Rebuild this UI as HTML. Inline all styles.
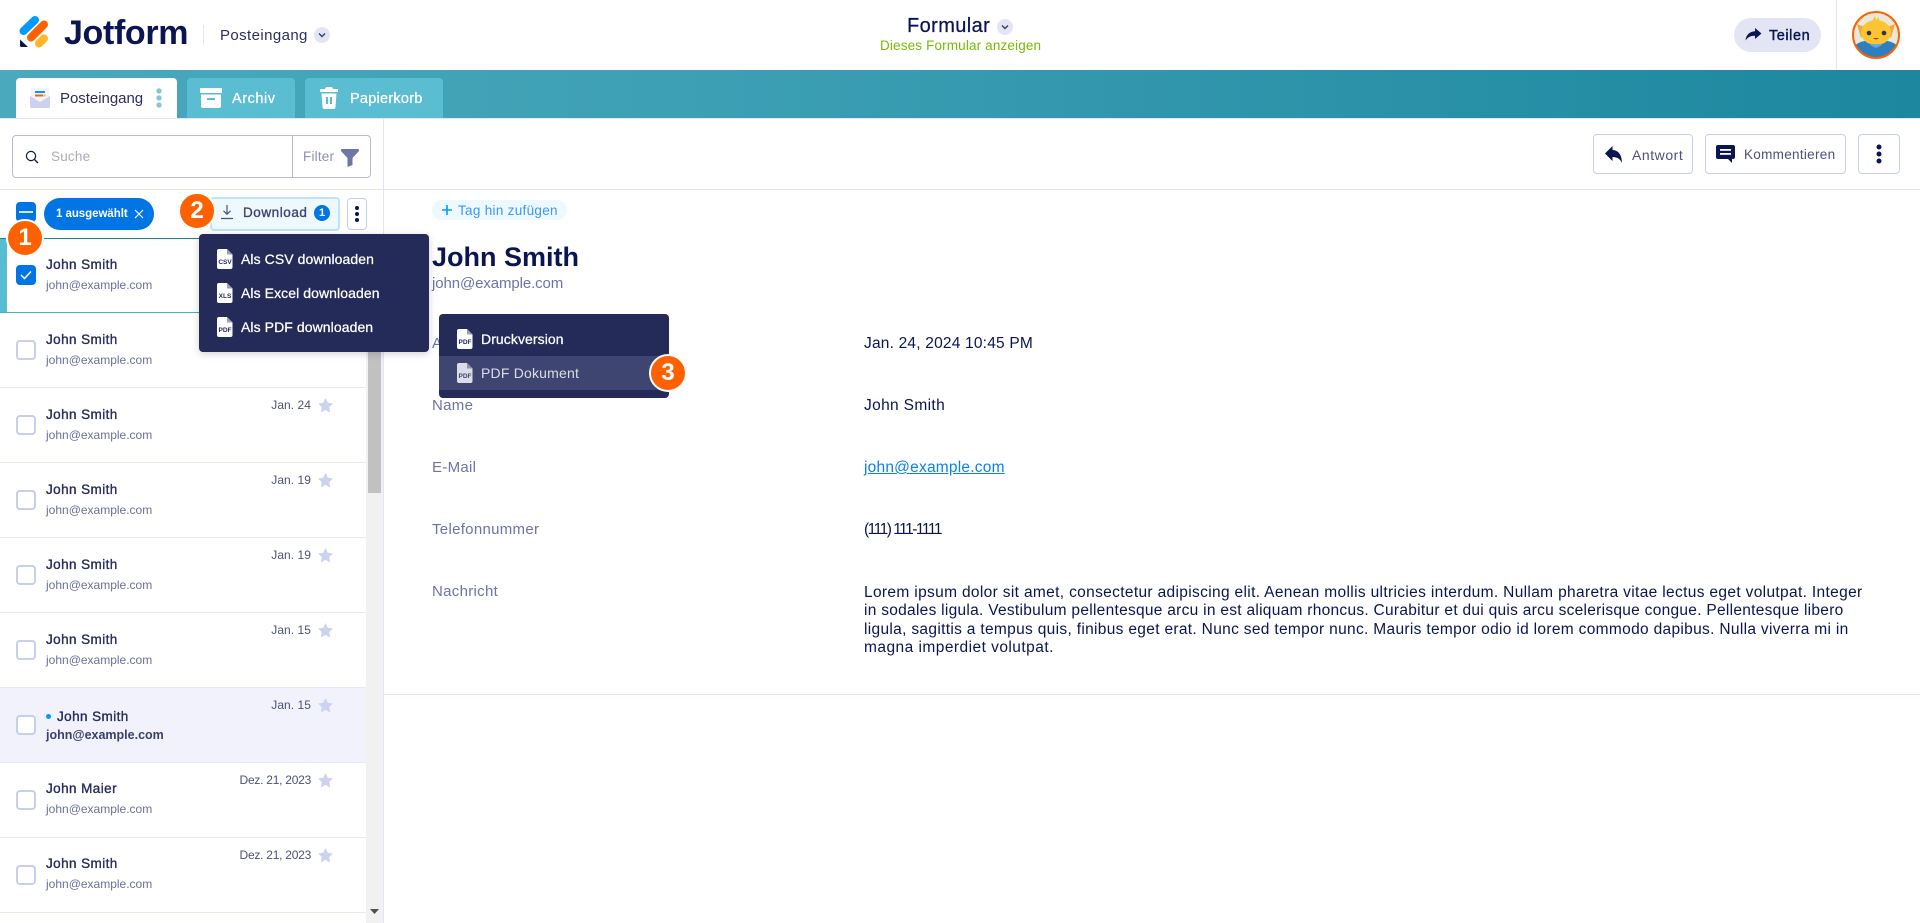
<!DOCTYPE html>
<html lang="de"><head><meta charset="utf-8"><title>Jotform Posteingang</title>
<style>
*{box-sizing:border-box}
html,body{margin:0;padding:0;width:1920px;height:923px;overflow:hidden;background:#fff;font-family:"Liberation Sans",sans-serif;color:#0a1551}
.a{position:absolute;white-space:nowrap}
.t{position:absolute;white-space:nowrap;line-height:20px;height:20px}
.m{-webkit-text-stroke:.25px currentColor}
.row{position:absolute;left:0;width:366px;height:75px;border-bottom:1px solid #e8e9f4;background:#fff}
.row>*{margin-top:-1px}
.cb{position:absolute;left:16px;top:28px;width:20px;height:20px;border:2px solid #c8ceed;border-radius:4px;background:#fff}
.nm{position:absolute;left:46px;top:17px;line-height:20px;font-size:13.5px;color:#252a5b;white-space:nowrap;-webkit-text-stroke:.35px currentColor;letter-spacing:.42px}
.em{position:absolute;left:46px;top:37px;line-height:20px;font-size:12px;color:#6c7096;white-space:nowrap;letter-spacing:0}
.dt{position:absolute;right:55px;top:8px;line-height:20px;font-size:12px;color:#4c5178;white-space:nowrap;letter-spacing:.05px}
.dz{letter-spacing:-.25px}
.st{position:absolute;left:318px;top:11px}
.st path{fill:#cdd2ee;stroke:#cdd2ee;stroke-width:1;stroke-linejoin:round}
.lab{position:absolute;left:432px;font-size:15px;line-height:20px;color:#6c73a8;white-space:nowrap;letter-spacing:.3px}
.val{position:absolute;left:864px;font-size:15.5px;line-height:20px;color:#0a1551;white-space:nowrap;letter-spacing:.2px}
.mi{position:absolute;font-size:14px;line-height:20px;color:#fff;white-space:nowrap;-webkit-text-stroke:.25px #fff;letter-spacing:.08px}
.b{position:absolute;border-radius:50%;background:#ff6100;border:2px solid #fff;color:#fff;font-size:24px;font-weight:bold;line-height:34px;text-align:center;width:38px;height:38px}
.btn{position:absolute;border:1px solid #c8ceed;border-radius:4px;background:#fff}
</style></head><body>

<!-- top bar -->
<svg class="a" style="left:0;top:0" width="60" height="60" viewBox="0 0 60 60">
<path d="M23.5 31L35 20" stroke="#0099ff" stroke-width="8" stroke-linecap="round"/>
<path d="M31 37.5L44 24.5" stroke="#ff6100" stroke-width="8" stroke-linecap="round"/>
<path d="M39 43.500L44 38.5" stroke="#ffb629" stroke-width="8" stroke-linecap="round"/>
<path d="M20 39.500L28 47H21.5Q20 47 20 45.500Z" fill="#0a1551"/>
</svg>
<div class="a" style="left:64px;top:14px;font-size:34px;line-height:38px;font-weight:bold;color:#0a1551;letter-spacing:-.35px">Jotform</div>
<div class="a" style="left:203px;top:25px;width:1px;height:20px;background:#e3e5f5"></div>
<div class="t" style="left:220px;top:26px;font-size:15px;color:#2a2f5f;letter-spacing:.4px">Posteingang</div>
<svg class="a" style="left:314px;top:27px" width="16" height="16"><circle cx="8" cy="8" r="8" fill="#e3e5f5"/><path d="M5 6.500L8 9.500L11 6.500" fill="none" stroke="#343c6a" stroke-width="1.400"/></svg>

<div class="a m" style="left:907px;top:14px;font-size:20px;line-height:24px;color:#0a1551;letter-spacing:.4px">Formular</div>
<svg class="a" style="left:997px;top:19px" width="16" height="16"><circle cx="8" cy="8" r="8" fill="#e3e5f5"/><path d="M5 6.500L8 9.500L11 6.500" fill="none" stroke="#343c6a" stroke-width="1.400"/></svg>
<div class="t" style="left:880px;top:36px;font-size:13.500px;color:#78bb07;letter-spacing:.15px">Dieses Formular anzeigen</div>

<div class="a" style="left:1734px;top:18px;width:87px;height:34px;border-radius:17px;background:#e3e5f5"></div>
<svg class="a" style="left:1745px;top:27px" width="17" height="16" viewBox="0 0 17 16"><path d="M10 1L16.500 6.500L10 12V8.800C6 8.600 3 10 .5 13.500C1 8 4.500 4.400 10 4.200Z" fill="#0a1551"/></svg>
<div class="t" style="left:1769px;top:26px;font-size:14.500px;color:#0a1551;letter-spacing:.55px;-webkit-text-stroke:.4px currentColor">Teilen</div>
<div class="a" style="left:1836px;top:0;width:1px;height:70px;background:#e3e5e8"></div>
<svg class="a" style="left:1852px;top:11px" width="48" height="48" viewBox="0 0 48 48">
<defs><clipPath id="ca"><circle cx="24" cy="24" r="22.500"/></clipPath></defs>
<circle cx="24" cy="24" r="23" fill="#e6e9dc"/>
<g clip-path="url(#ca)">
<path d="M2 48V36Q6 29 24 29T46 36V48Z" fill="#2e7fc0"/>
<path d="M5 13L15 17L9 27Z" fill="#f4a63a"/><path d="M43 13L33 17L39 27Z" fill="#f4a63a"/>
<ellipse cx="24" cy="21.500" rx="15" ry="12.500" fill="#fbc531"/>
<path d="M20 10L23 5L24 9L27 6L27 11Z" fill="#fbc531"/>
<circle cx="17" cy="22" r="2.300" fill="#33304a"/><circle cx="32" cy="22" r="2.300" fill="#33304a"/>
<path d="M21 27Q24 30 27 27Z" fill="#b5372c"/>
<path d="M18 34L24 37L30 34L28 33H20Z" fill="#6aa9dc"/>
</g>
<circle cx="24" cy="24" r="23" fill="none" stroke="#ff6100" stroke-width="2"/>
</svg>

<!-- tab band -->
<div class="a" style="left:0;top:70px;width:1920px;height:48px;background:linear-gradient(90deg,#4aa9bc 0%,#3ea0b5 35%,#1c879f 100%)"></div>
<div class="a" style="left:16px;top:78px;width:161px;height:40px;background:#fff;border-radius:4px 4px 0 0"></div>
<svg class="a" style="left:30px;top:88px" width="20" height="20" viewBox="0 0 20 20"><rect x="1" y="0" width="18" height="20" rx="2" fill="#f3f3fb"/><path d="M0 8L10 14L20 8V18Q20 20 18 20H2Q0 20 0 18Z" fill="#cdd0ef"/><rect x="5" y="3" width="10" height="2" fill="#0099ff"/><rect x="5" y="6.500" width="8" height="2" fill="#ff6100"/><rect x="13.500" y="6.500" width="2" height="2" fill="#ffb629"/></svg>
<div class="t" style="left:60px;top:89px;font-size:15px;color:#2a2f5f;letter-spacing:-.03px">Posteingang</div>
<svg class="a" style="left:154px;top:87px" width="8" height="22"><circle cx="5" cy="4" r="2.700" fill="#8cc6d5"/><circle cx="5" cy="11" r="2.700" fill="#8cc6d5"/><circle cx="5" cy="18" r="2.700" fill="#8cc6d5"/></svg>

<div class="a" style="left:187px;top:78px;width:108px;height:40px;background:#5bbdd2;border-radius:4px 4px 0 0"></div>
<svg class="a" style="left:200px;top:88px" width="22" height="20" viewBox="0 0 22 20"><rect x="0" y="0" width="22" height="5" fill="#fff"/><path d="M1 6.500H21V18Q21 20 19 20H3Q1 20 1 18Z" fill="#fff"/><rect x="7" y="10" width="8" height="2" fill="#5bbdd2"/></svg>
<div class="t m" style="left:232px;top:89px;font-size:14.500px;color:#fff;letter-spacing:.55px">Archiv</div>

<div class="a" style="left:305px;top:78px;width:138px;height:40px;background:#5bbdd2;border-radius:4px 4px 0 0"></div>
<svg class="a" style="left:320px;top:87px" width="18" height="22" viewBox="0 0 18 22"><path d="M6 0H12L13 2H18V5H0V2H5Z" fill="#fff"/><path d="M1.500 6.500H16.500L15.500 20Q15.400 22 13.500 22H4.500Q2.600 22 2.500 20Z" fill="#fff"/><rect x="6" y="10" width="2" height="7" fill="#5bbdd2"/><rect x="10" y="10" width="2" height="7" fill="#5bbdd2"/></svg>
<div class="t m" style="left:350px;top:89px;font-size:14.500px;color:#fff;letter-spacing:.25px">Papierkorb</div>
<div class="a" style="left:0;top:118px;width:1920px;height:1px;background:#e3e5f5"></div>

<!-- sidebar top -->
<div class="a" style="left:383px;top:119px;width:1px;height:804px;background:#e3e5f5"></div>
<div class="a" style="left:12px;top:135px;width:359px;height:43px;border:1px solid #b8bbd8;border-radius:4px;background:#fff"></div>
<div class="a" style="left:292px;top:135px;width:1px;height:43px;background:#b8bbd8"></div>
<svg class="a" style="left:25px;top:150px" width="14" height="14" viewBox="0 0 14 14"><circle cx="6" cy="6" r="4.600" fill="none" stroke="#0a1551" stroke-width="1.200"/><path d="M9.500 9.500L13 13" stroke="#0a1551" stroke-width="1.300"/></svg>
<div class="t" style="left:51px;top:147px;font-size:13.500px;color:#a9abbd;letter-spacing:.2px">Suche</div>
<div class="t" style="left:303px;top:147px;font-size:13.500px;color:#8d90b0;letter-spacing:.2px">Filter</div>
<svg class="a" style="left:341px;top:149px" width="18" height="18" viewBox="0 0 18 18"><path d="M0 1Q0 0 1 0H17Q18 0 18 1V2L11.500 9V16L6.500 18V9L0 2Z" fill="#6f76a7"/></svg>
<div class="a" style="left:0;top:189px;width:1920px;height:1px;background:#e3e5e8"></div>

<!-- list -->
<div class="row" style="top:238px;height:75px;border-top:1px solid #0b8a9c;border-bottom:1px solid #3fb3c7">
<div class="a" style="left:0;top:0;width:7px;height:73px;background:#57bdd0;margin-top:0"></div>
<div class="cb" style="top:27px;background:#0075e3;border-color:#0075e3"><svg class="a" style="left:2px;top:3px" width="12" height="10"><path d="M1 5L4.500 8.500L11 1.500" fill="none" stroke="#fff" stroke-width="1.500"/></svg></div>
<div class="nm">John Smith</div><div class="em">john@example.com</div></div>

<div class="row" style="top:313px"><div class="cb"></div><div class="nm" style="top:18px">John Smith</div><div class="em" style="top:38px">john@example.com</div></div>
<div class="row" style="top:388px"><div class="cb"></div><div class="nm" style="top:18px">John Smith</div><div class="em" style="top:38px">john@example.com</div><div class="dt">Jan. 24</div><svg class="st" width="15" height="15" viewBox="-1 -1 18 18"><path d="M8 0L10.400 5.200L16 5.900L11.900 9.800L13 15.500L8 12.700L3 15.500L4.100 9.800L0 5.900L5.600 5.200Z"/></svg></div>
<div class="row" style="top:463px"><div class="cb"></div><div class="nm" style="top:18px">John Smith</div><div class="em" style="top:38px">john@example.com</div><div class="dt">Jan. 19</div><svg class="st" width="15" height="15" viewBox="-1 -1 18 18"><path d="M8 0L10.400 5.200L16 5.900L11.900 9.800L13 15.500L8 12.700L3 15.500L4.100 9.800L0 5.900L5.600 5.200Z"/></svg></div>
<div class="row" style="top:538px"><div class="cb"></div><div class="nm" style="top:18px">John Smith</div><div class="em" style="top:38px">john@example.com</div><div class="dt">Jan. 19</div><svg class="st" width="15" height="15" viewBox="-1 -1 18 18"><path d="M8 0L10.400 5.200L16 5.900L11.900 9.800L13 15.500L8 12.700L3 15.500L4.100 9.800L0 5.900L5.600 5.200Z"/></svg></div>
<div class="row" style="top:613px"><div class="cb"></div><div class="nm" style="top:18px">John Smith</div><div class="em" style="top:38px">john@example.com</div><div class="dt">Jan. 15</div><svg class="st" width="15" height="15" viewBox="-1 -1 18 18"><path d="M8 0L10.400 5.200L16 5.900L11.900 9.800L13 15.500L8 12.700L3 15.500L4.100 9.800L0 5.900L5.600 5.200Z"/></svg></div>
<div class="row" style="top:688px;background:#f1f2fb"><div class="cb" style="top:28px"></div>
<div class="a" style="left:46px;top:27px;width:5px;height:5px;border-radius:50%;background:#0099ff"></div>
<div class="nm" style="left:57px;top:20px">John Smith</div><div class="em" style="top:38px;font-size:12.500px;font-weight:bold;color:#3a3f6e;letter-spacing:0">john@example.com</div><div class="dt">Jan. 15</div><svg class="st" width="15" height="15" viewBox="-1 -1 18 18"><path d="M8 0L10.400 5.200L16 5.900L11.900 9.800L13 15.500L8 12.700L3 15.500L4.100 9.800L0 5.900L5.600 5.200Z"/></svg></div>
<div class="row" style="top:763px"><div class="cb"></div><div class="nm" style="top:17px">John Maier</div><div class="em" style="top:37px">john@example.com</div><div class="dt dz">Dez. 21, 2023</div><svg class="st" width="15" height="15" viewBox="-1 -1 18 18"><path d="M8 0L10.400 5.200L16 5.900L11.900 9.800L13 15.500L8 12.700L3 15.500L4.100 9.800L0 5.900L5.600 5.200Z"/></svg></div>
<div class="row" style="top:838px"><div class="cb"></div><div class="nm" style="top:17px">John Smith</div><div class="em" style="top:37px">john@example.com</div><div class="dt dz">Dez. 21, 2023</div><svg class="st" width="15" height="15" viewBox="-1 -1 18 18"><path d="M8 0L10.400 5.200L16 5.900L11.900 9.800L13 15.500L8 12.700L3 15.500L4.100 9.800L0 5.900L5.600 5.200Z"/></svg></div>

<!-- scrollbar -->
<div class="a" style="left:366px;top:238px;width:17px;height:685px;background:#f1f1f1"></div>
<div class="a" style="left:368px;top:300px;width:13px;height:193px;background:#c1c1c1"></div>
<svg class="a" style="left:370px;top:909px" width="9" height="6"><path d="M0 0H9L4.500 5Z" fill="#505050"/></svg>

<!-- selection toolbar -->
<div class="a" style="left:16px;top:202px;width:20px;height:20px;background:#0075e3;border-radius:4px"><div class="a" style="left:3px;top:9px;width:14px;height:2px;background:#cfe6fb"></div></div>
<div class="a" style="left:44px;top:198px;width:110px;height:32px;border-radius:16px;background:#0075e3"></div>
<div class="t" style="left:56px;top:204px;font-size:11.500px;font-weight:bold;color:#fff;letter-spacing:-.05px">1 ausgewählt</div>
<svg class="a" style="left:134px;top:209px" width="10" height="10"><path d="M1 1L9 9M9 1L1 9" stroke="#fff" stroke-width="1.200"/></svg>

<div class="a" style="left:210px;top:197px;width:130px;height:34px;border:2px solid #bde4fa;border-radius:4px;background:#edf8ff"></div>
<svg class="a" style="left:221px;top:205px" width="12" height="15" viewBox="0 0 12 15"><path d="M6 0V9M2.500 5.800L6 9.300L9.500 5.800M0 13.500H12" fill="none" stroke="#4c5178" stroke-width="1.200"/></svg>
<div class="t" style="left:243px;top:203px;font-size:13.500px;color:#3d4472;letter-spacing:.55px;-webkit-text-stroke:.35px currentColor">Download</div>
<div class="a" style="left:314px;top:205px;width:16px;height:16px;border-radius:50%;background:#0075e3;color:#fff;font-size:11px;font-weight:bold;line-height:16px;text-align:center">1</div>

<div class="btn" style="left:347px;top:198px;width:20px;height:32px"></div>
<svg class="a" style="left:354px;top:205px" width="6" height="18"><circle cx="3" cy="3" r="2" fill="#0a1551"/><circle cx="3" cy="9" r="2" fill="#0a1551"/><circle cx="3" cy="15" r="2" fill="#0a1551"/></svg>

<!-- content toolbar -->
<div class="btn" style="left:1593px;top:134px;width:100px;height:40px"></div>
<svg class="a" style="left:1605px;top:146px" width="17" height="17" viewBox="0 0 17 17"><path d="M7.500 0V4C13 4.300 16.800 8 17 17C15 12.700 12 11 7.500 11V15L0 7.500Z" fill="#0a1551"/></svg>
<div class="t" style="left:1632px;top:145px;font-size:14px;color:#4c5178;letter-spacing:.55px">Antwort</div>
<div class="btn" style="left:1705px;top:134px;width:141px;height:40px"></div>
<svg class="a" style="left:1716px;top:145px" width="19" height="18" viewBox="0 0 19 18"><path d="M2 0H17Q19 0 19 2V12Q19 14 17 14H16V18L12 14H2Q0 14 0 12V2Q0 0 2 0Z" fill="#0a1551"/><rect x="4" y="4" width="11" height="1.800" fill="#fff"/><rect x="4" y="8" width="11" height="1.800" fill="#fff"/></svg>
<div class="t" style="left:1744px;top:145px;font-size:13.500px;color:#4c5178;letter-spacing:.3px">Kommentieren</div>
<div class="btn" style="left:1858px;top:134px;width:42px;height:40px"></div>
<svg class="a" style="left:1876px;top:144px" width="6" height="20"><circle cx="3" cy="3" r="2.500" fill="#0a1551"/><circle cx="3" cy="10" r="2.500" fill="#0a1551"/><circle cx="3" cy="17" r="2.500" fill="#0a1551"/></svg>

<!-- content -->
<div class="a" style="left:432px;top:200px;width:135px;height:20px;border-radius:10px;background:#edf8ff"></div>
<svg class="a" style="left:442px;top:205px" width="10" height="10"><path d="M5 0V10M0 5H10" stroke="#0099ff" stroke-width="1.600"/></svg>
<div class="t" style="left:458px;top:201px;font-size:13.500px;color:#3b97f5;letter-spacing:.3px">Tag hin zufügen</div>
<div class="a" style="left:432px;top:240px;font-size:27px;line-height:34px;font-weight:bold;color:#0a1551;letter-spacing:0">John Smith</div>
<div class="t" style="left:432px;top:274px;font-size:15px;color:#6c73a8;letter-spacing:-.1px">john@example.com</div>

<div class="lab" style="top:334px">Antwort</div>
<div class="lab" style="top:396px">Name</div>
<div class="lab" style="top:458px">E-Mail</div>
<div class="lab" style="top:520px">Telefonnummer</div>
<div class="lab" style="top:582px">Nachricht</div>

<div class="val" style="top:334px">Jan. 24, 2024 10:45 PM</div>
<div class="val" style="top:396px;letter-spacing:.35px">John Smith</div>
<div class="val" style="top:458px;color:#0a82e6;text-decoration:underline;letter-spacing:.22px">john@example.com</div>
<div class="val" style="top:520px;letter-spacing:-1.5px">(111) 111-1111</div>
<div class="val" style="top:583px;letter-spacing:.34px">Lorem ipsum dolor sit amet, consectetur adipiscing elit. Aenean mollis ultricies interdum. Nullam pharetra vitae lectus eget volutpat. Integer</div>
<div class="val" style="top:601px;letter-spacing:.28px">in sodales ligula. Vestibulum pellentesque arcu in est aliquam rhoncus. Curabitur et dui quis arcu scelerisque congue. Pellentesque libero</div>
<div class="val" style="top:620px;letter-spacing:.32px">ligula, sagittis a tempus quis, finibus eget erat. Nunc sed tempor nunc. Mauris tempor odio id lorem commodo dapibus. Nulla viverra mi in</div>
<div class="val" style="top:638px;letter-spacing:.46px">magna imperdiet volutpat.</div>
<div class="a" style="left:384px;top:694px;width:1536px;height:1px;background:#e3e5f5"></div>

<!-- menu 1 -->
<div class="a" style="left:199px;top:234px;width:230px;height:118px;background:#252b59;border-radius:4px;box-shadow:0 2px 8px rgba(0,0,0,.18)"></div>
<svg class="a" style="left:217px;top:249px" width="16" height="20" viewBox="0 0 16 20"><path d="M2 0H10L15.500 5.500V18Q15.500 20 13.500 20H2Q0 20 0 18V2Q0 0 2 0Z" fill="#fff"/><path d="M10 0V5.500H15.500Z" fill="#9a9fc0"/><text x="8" y="15" font-size="6.500" font-weight="bold" text-anchor="middle" fill="#252b59" font-family="Liberation Sans">CSV</text></svg>
<div class="mi" style="left:241px;top:249px">Als CSV downloaden</div>
<svg class="a" style="left:217px;top:283px" width="16" height="20" viewBox="0 0 16 20"><path d="M2 0H10L15.500 5.500V18Q15.500 20 13.500 20H2Q0 20 0 18V2Q0 0 2 0Z" fill="#fff"/><path d="M10 0V5.500H15.500Z" fill="#9a9fc0"/><text x="8" y="15" font-size="6.500" font-weight="bold" text-anchor="middle" fill="#252b59" font-family="Liberation Sans">XLS</text></svg>
<div class="mi" style="left:241px;top:283px">Als Excel downloaden</div>
<svg class="a" style="left:217px;top:317px" width="16" height="20" viewBox="0 0 16 20"><path d="M2 0H10L15.500 5.500V18Q15.500 20 13.500 20H2Q0 20 0 18V2Q0 0 2 0Z" fill="#fff"/><path d="M10 0V5.500H15.500Z" fill="#9a9fc0"/><text x="8" y="15" font-size="6.500" font-weight="bold" text-anchor="middle" fill="#252b59" font-family="Liberation Sans">PDF</text></svg>
<div class="mi" style="left:241px;top:317px">Als PDF downloaden</div>

<!-- menu 2 -->
<div class="a" style="left:439px;top:314px;width:230px;height:84px;background:#252b59;border-radius:4px"></div>
<div class="a" style="left:439px;top:356px;width:230px;height:34px;background:#3e4570"></div>
<svg class="a" style="left:457px;top:329px" width="16" height="20" viewBox="0 0 16 20"><path d="M2 0H10L15.500 5.500V18Q15.500 20 13.500 20H2Q0 20 0 18V2Q0 0 2 0Z" fill="#fff"/><path d="M10 0V5.500H15.500Z" fill="#9a9fc0"/><text x="8" y="15" font-size="6.500" font-weight="bold" text-anchor="middle" fill="#252b59" font-family="Liberation Sans">PDF</text></svg>
<div class="mi" style="left:481px;top:329px">Druckversion</div>
<svg class="a" style="left:457px;top:363px" width="16" height="20" viewBox="0 0 16 20"><path d="M2 0H10L15.500 5.500V18Q15.500 20 13.500 20H2Q0 20 0 18V2Q0 0 2 0Z" fill="#dcdde6"/><path d="M10 0V5.500H15.500Z" fill="#8f93b0"/><text x="8" y="15" font-size="6.500" font-weight="bold" text-anchor="middle" fill="#3e4570" font-family="Liberation Sans">PDF</text></svg>
<div class="mi" style="left:481px;top:363px;color:#dcdde6;-webkit-text-stroke:0;letter-spacing:.2px">PDF Dokument</div>

<!-- badges -->
<div class="b" style="left:6px;top:219px">1</div>
<div class="b" style="left:178px;top:192px">2</div>
<div class="b" style="left:649px;top:354px">3</div>

</body></html>
